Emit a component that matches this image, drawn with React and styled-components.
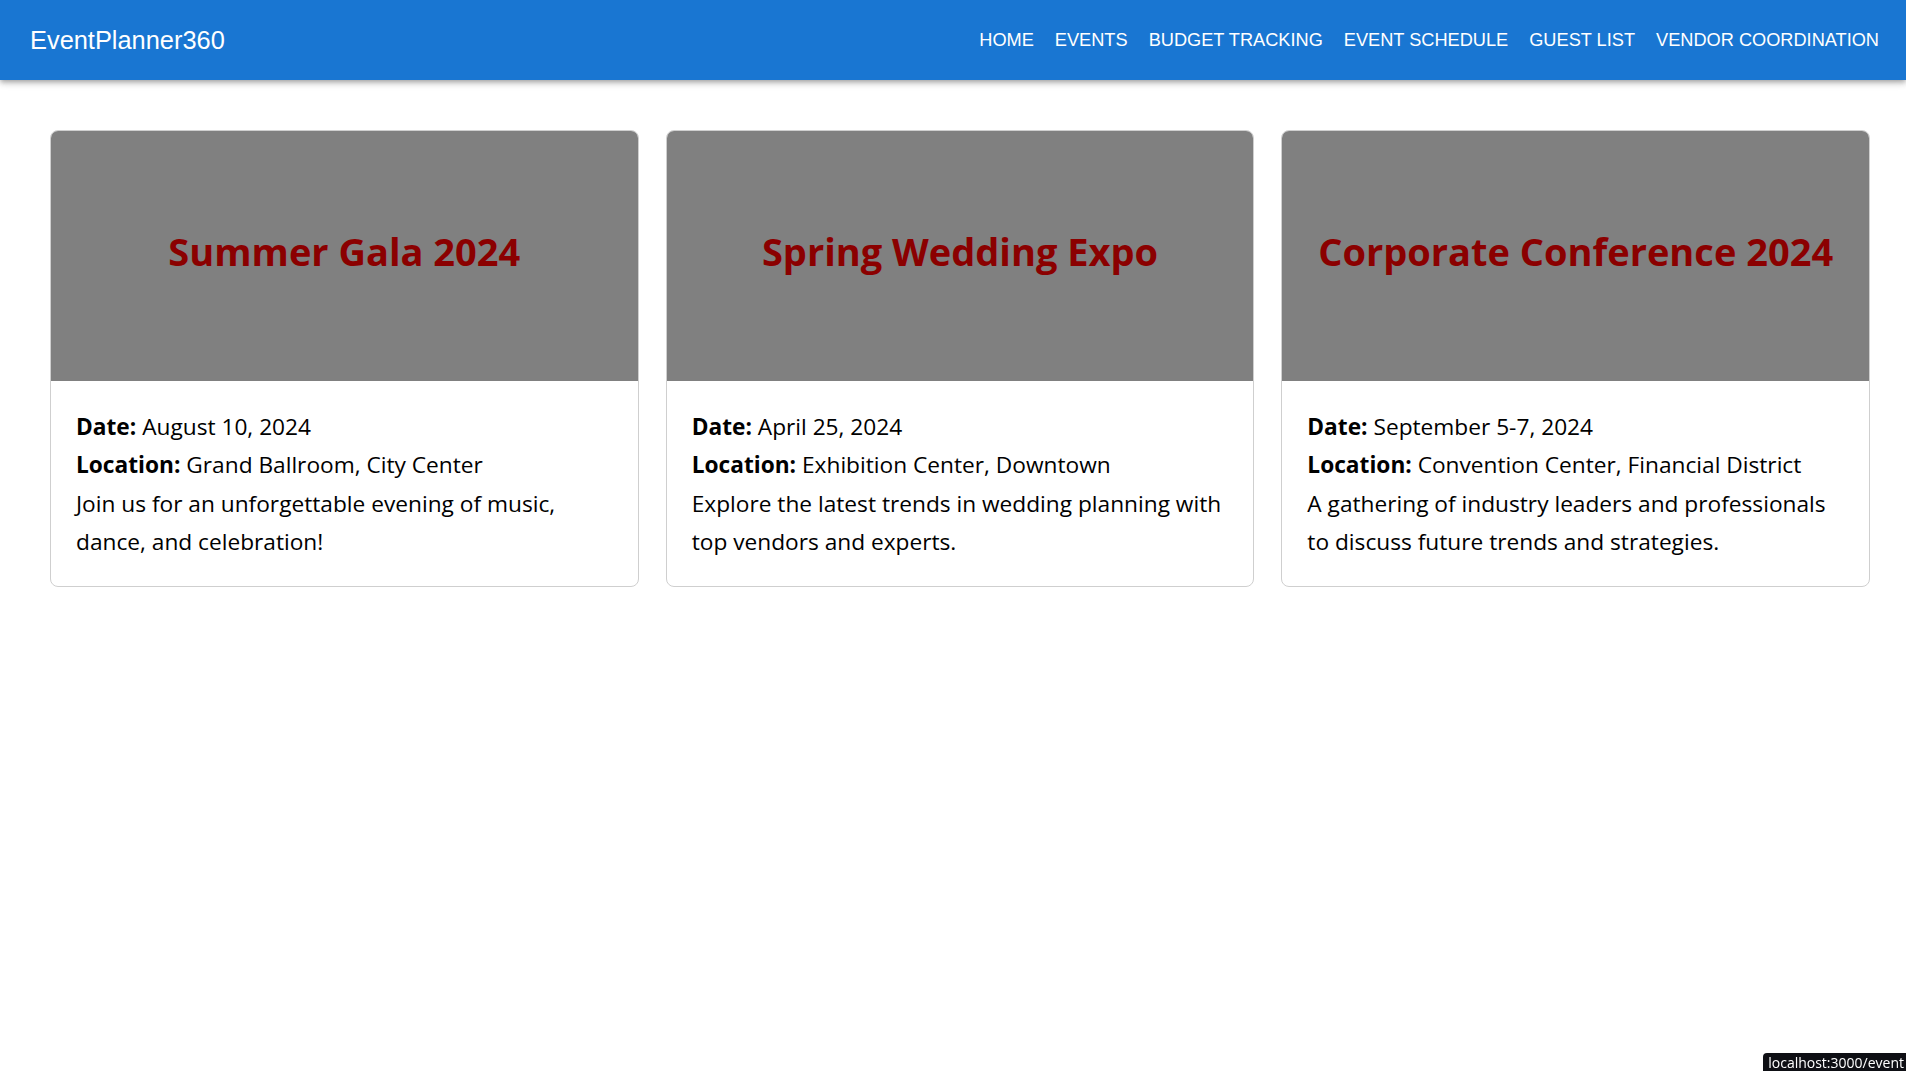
import React from "react";
import styled, { createGlobalStyle } from "styled-components";

const GlobalStyle = createGlobalStyle`
  html, body {
    margin: 0;
    padding: 0;
    background: #ffffff;
  }
  body {
    font-family: "Open Sans", "Noto Sans", sans-serif;
    color: #000;
  }
  * { box-sizing: border-box; }
`;

const NavBar = styled.header`
  height: 80px;
  background: #1976d2;
  color: #fff;
  display: flex;
  align-items: center;
  justify-content: space-between;
  padding: 0 27px 0 30px;
  box-shadow: 0 2px 4px -1px rgba(0,0,0,0.2), 0 4px 5px 0 rgba(0,0,0,0.14), 0 1px 10px 0 rgba(0,0,0,0.12);
  position: relative;
  z-index: 1;
`;

const Brand = styled.div`
  font-family: "Liberation Sans", Arial, sans-serif;
  font-size: 25.4px;
  font-weight: 400;
`;

const NavLinks = styled.nav`
  display: flex;
  align-items: center;
  gap: 21px;
`;

const NavLink = styled.a`
  font-family: "Liberation Sans", Arial, sans-serif;
  font-size: 18.2px;
  color: #fff;
  text-decoration: none;
  text-transform: uppercase;
  cursor: pointer;
`;

const Main = styled.main`
  padding: 50px 36px 0 50px;
  display: grid;
  grid-template-columns: repeat(3, 1fr);
  gap: 27px;
  align-items: start;
`;

const Card = styled.article`
  border: 1px solid #cfcfcf;
  border-radius: 8px;
  overflow: hidden;
  background: #fff;
`;

const CardHeader = styled.div`
  height: 250px;
  background: #808080;
  display: flex;
  align-items: center;
  justify-content: center;
`;

const Title = styled.h2`
  margin: 0;
  color: #8b0000;
  font-size: 38px;
  font-weight: 700;
  text-align: center;
  padding-bottom: 10px;
`;

const CardBody = styled.div`
  padding: 27px 24px 24px 25px;
`;

const Line = styled.p`
  margin: 0;
  font-size: 22.7px;
  line-height: 38.4px;
`;

const Label = styled.strong`
  font-weight: 700;
`;

const StatusBar = styled.div`
  position: fixed;
  right: 0;
  bottom: 0;
  height: 18px;
  background: #0e0f14;
  color: #fff;
  font-family: "Open Sans", sans-serif;
  font-size: 14px;
  line-height: 16px;
  padding: 2px 2px 0 5px;
  border-top-left-radius: 4px;
  white-space: nowrap;
`;

const events = [
  {
    title: "Summer Gala 2024",
    date: "August 10, 2024",
    location: "Grand Ballroom, City Center",
    description: "Join us for an unforgettable evening of music, dance, and celebration!",
  },
  {
    title: "Spring Wedding Expo",
    date: "April 25, 2024",
    location: "Exhibition Center, Downtown",
    description: "Explore the latest trends in wedding planning with top vendors and experts.",
  },
  {
    title: "Corporate Conference 2024",
    date: "September 5-7, 2024",
    location: "Convention Center, Financial District",
    description: "A gathering of industry leaders and professionals to discuss future trends and strategies.",
  },
];

const links = ["Home", "Events", "Budget Tracking", "Event Schedule", "Guest List", "Vendor Coordination"];

export default function App() {
  return (
    <>
      <GlobalStyle />
      <NavBar>
        <Brand>EventPlanner360</Brand>
        <NavLinks>
          {links.map((l) => (
            <NavLink key={l}>{l}</NavLink>
          ))}
        </NavLinks>
      </NavBar>
      <Main>
        {events.map((e) => (
          <Card key={e.title}>
            <CardHeader>
              <Title>{e.title}</Title>
            </CardHeader>
            <CardBody>
              <Line><Label>Date:</Label> {e.date}</Line>
              <Line><Label>Location:</Label> {e.location}</Line>
              <Line>{e.description}</Line>
            </CardBody>
          </Card>
        ))}
      </Main>
      <StatusBar>localhost:3000/event</StatusBar>
    </>
  );
}
